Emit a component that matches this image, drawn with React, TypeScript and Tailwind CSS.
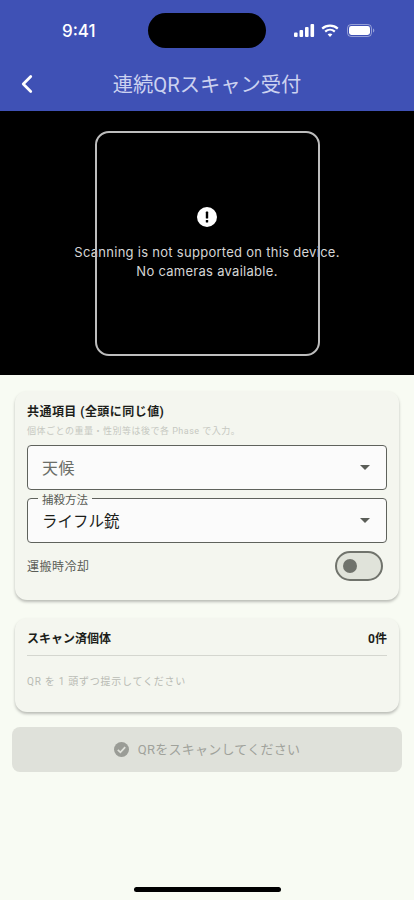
import React from 'react';
import { ChevronLeft } from 'lucide-react';

const StatusIcons = () => (
  <div className="flex items-center gap-[6px]">
    <svg width="21" height="13" viewBox="0 0 21 13" fill="white">
      <rect x="0" y="8.5" width="3.6" height="4.5" rx="1" />
      <rect x="5.5" y="6" width="3.6" height="7" rx="1" />
      <rect x="11" y="3" width="3.6" height="10" rx="1" />
      <rect x="16.5" y="0" width="3.6" height="13" rx="1" />
    </svg>
    <svg width="18" height="13" viewBox="0 0 18 13" fill="none" stroke="white" strokeLinecap="butt">
      <path d="M1.2 4.6C5.6.6 12.4.6 16.8 4.6" strokeWidth="2.2" />
      <path d="M4.2 7.6c2.8-2.5 6.8-2.5 9.6 0" strokeWidth="2.2" />
      <path d="M9 13 6.6 10.2c1.4-1.1 3.4-1.1 4.8 0z" fill="white" stroke="none" />
    </svg>
    <svg width="28" height="13" viewBox="0 0 28 13" fill="none" className="ml-[2px]">
      <rect x="0.5" y="0.5" width="24" height="12" rx="3.6" stroke="white" strokeOpacity="0.45" />
      <rect x="2" y="2" width="21" height="9" rx="2.4" fill="white" />
      <path d="M26 4.5c.8.3 1.3 1.1 1.3 2s-.5 1.7-1.3 2z" fill="white" fillOpacity="0.45" />
    </svg>
  </div>
);

const Header = () => (
  <header className="relative h-[111px] bg-[#3f51b5] flex flex-col">
    <div className="h-[59px] flex items-start justify-between pt-[20px] pl-[62px] pr-[39px]">
      <span className="text-white text-[17px] leading-[22px] font-medium font-[Inter,sans-serif]">9:41</span>
      <div className="pt-[4px]">
        <StatusIcons />
      </div>
    </div>
    {/* dynamic island */}
    <div className="absolute left-[148px] top-[13px] w-[118px] h-[35px] rounded-full bg-black" />
    <div className="relative h-[52px] flex items-center justify-center">
      <ChevronLeft className="absolute left-[12px] top-[10px] text-white" size={30} strokeWidth={2.2} />
      <h1 className="text-[20.3px] leading-[28px] text-[#ccd2f0] font-normal">連続QRスキャン受付</h1>
    </div>
  </header>
);

const Camera = () => (
  <section className="relative h-[264px] bg-black flex flex-col items-center pt-[96px]">
    <div className="absolute left-[94.5px] top-[19.5px] w-[225px] h-[225px] rounded-[14px] border-2 border-[#bdbdbd]" />
    <svg width="20" height="20" viewBox="0 0 20 20" className="mb-[16px]">
      <circle cx="10" cy="10" r="10" fill="white" />
      <rect x="8.8" y="4.6" width="2.4" height="7" rx="0.6" fill="black" />
      <rect x="8.8" y="13" width="2.4" height="2.4" rx="0.5" fill="black" />
    </svg>
    <p className="text-[13px] leading-[19px] text-[#d6d6d6] tracking-[0.28px] text-center font-[Inter,sans-serif]">
      Scanning is not supported on this device.
      <br />
      No cameras available.
    </p>
  </section>
);

const Dropdown = ({ value, label, placeholder }: { value: string; label?: string; placeholder?: boolean }) => (
  <div className="relative h-[45px] rounded-[4px] border border-[#5f625c] bg-[#fbfbfb] flex items-center justify-between pl-[14px] pr-[16px]">
    {label && (
      <span className="absolute left-[10px] top-[-7px] px-[4px] text-[11.5px] leading-[16px] text-[#5a5d57] bg-[linear-gradient(to_bottom,#f4f6ef_7px,#fbfbfb_7px)]">
        {label}
      </span>
    )}
    <span
      className={
        placeholder
          ? 'text-[16px] leading-[24px] tracking-[0.4px] text-[#6b6e68] mt-[2px]'
          : 'text-[15.5px] leading-[24px] text-[#1c1e1a] mt-[2px]'
      }
    >
      {value}
    </span>
    <svg width="10" height="5" viewBox="0 0 10 5" fill="#5a5d57">
      <path d="M0 0h10L5 5z" />
    </svg>
  </div>
);

const CommonCard = () => (
  <section className="rounded-[12px] bg-[#f4f6ef] shadow-[0_2px_3px_rgba(0,0,0,0.25)] px-[12px] pt-[13px] h-[209px]">
    <h2 className="text-[12px] leading-[16px] font-bold text-[#1c1e1a] tracking-[0.45px]">共通項目 (全頭に同じ値)</h2>
    <p className="mt-[4px] text-[9px] leading-[14px] text-[#c6c8c1] tracking-[0.5px]">
      個体ごとの重量・性別等は後で各 Phase で入力。
    </p>
    <div className="mt-[7px] flex flex-col gap-[8px]">
      <Dropdown value="天候" placeholder />
      <Dropdown value="ライフル銃" label="捕殺方法" />
    </div>
    <div className="mt-[8px] flex items-center justify-between pr-[4px]">
      <span className="text-[12px] leading-[16px] text-[#5a5d57] tracking-[0.5px] mt-[2px]">運搬時冷却</span>
      <div className="w-[48px] h-[30px] rounded-full border-2 border-[#70736c] bg-[#e0e3da] flex items-center pl-[6px]">
        <div className="w-[14px] h-[14px] rounded-full bg-[#70736c]" />
      </div>
    </div>
  </section>
);

const ScannedCard = () => (
  <section className="mt-[18px] rounded-[12px] bg-[#f4f6ef] shadow-[0_2px_3px_rgba(0,0,0,0.25)] px-[12px] pt-[13px] h-[94px]">
    <div className="flex items-center justify-between pb-[8px] border-b border-[#d4d6cf]">
      <h2 className="text-[12px] leading-[16px] font-bold text-[#1c1e1a]">スキャン済個体</h2>
      <span className="text-[12px] leading-[16px] font-bold text-[#1c1e1a]">0件</span>
    </div>
    <p className="mt-[19px] text-[10px] leading-[14px] text-[#b9bbb4] tracking-[0.75px]">QR を 1 頭ずつ提示してください</p>
  </section>
);

const SubmitButton = () => (
  <button className="mt-[15px] mx-[-3px] w-[calc(100%+6px)] h-[45px] rounded-[8px] bg-[#dfe1da] flex items-center justify-center gap-[9px]">
    <svg width="15" height="15" viewBox="0 0 15 15">
      <circle cx="7.5" cy="7.5" r="7.5" fill="#9a9c96" />
      <path d="M3.8 7.8 6.4 10.3 11.2 5.2" fill="none" stroke="#dfe1da" strokeWidth="1.8" />
    </svg>
    <span className="text-[13px] leading-[20px] font-normal text-[#a0a29b] tracking-[0.25px]">QRをスキャンしてください</span>
  </button>
);

export default function App() {
  return (
    <div className="relative w-[414px] h-[900px] overflow-hidden bg-[#f8fbf3] font-['Roboto','Noto_Sans_CJK_JP',sans-serif]">
      <Header />
      <Camera />
      <main className="px-[15px] pt-[16px]">
        <CommonCard />
        <ScannedCard />
        <SubmitButton />
      </main>
      {/* home indicator */}
      <div className="absolute left-[134px] bottom-[8px] w-[147px] h-[5px] rounded-full bg-black" />
    </div>
  );
}
